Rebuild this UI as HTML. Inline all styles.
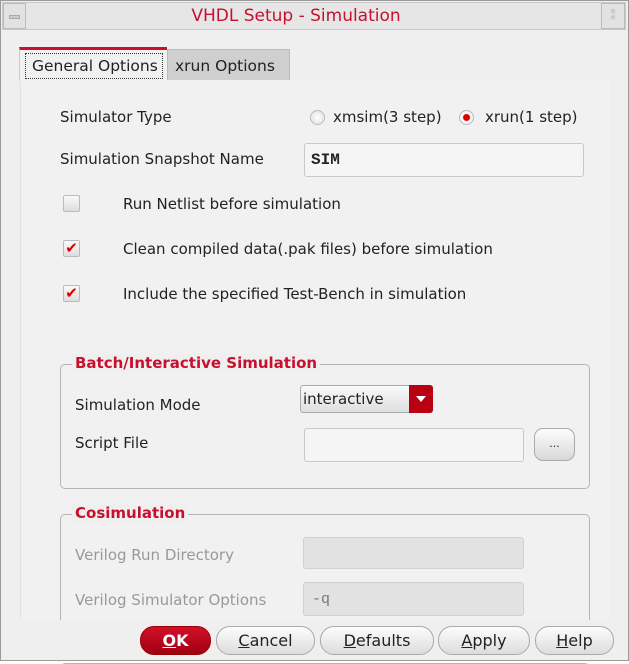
<!DOCTYPE html>
<html><head><style>
*{box-sizing:border-box;margin:0;padding:0}
body{width:629px;height:663px;background:#fff;font-family:"DejaVu Sans","Liberation Sans",sans-serif;font-size:15px;color:#222;position:relative;overflow:hidden}
.a{position:absolute}
.win{left:0;top:0;width:629px;height:663px;border:1px solid #999;background:#efefef}
.tb{left:2px;top:2px;width:624px;height:28px;background:#e6e6e6;border:1px solid #c8c8c8}
.lbl{position:absolute;line-height:18px;white-space:nowrap}
.inp{position:absolute;background:#f5f5f5;border:1px solid #c8c8c8;border-radius:3px}
.cb{position:absolute;width:17px;height:17px;border:1px solid #bbb;border-radius:2px;background:linear-gradient(#fafafa,#ddd);color:#d00;font-size:15px;line-height:15px;text-align:center;font-weight:bold}
.grp{position:absolute;border:1px solid #b5b5b5;border-radius:5px}
.gt{position:absolute;background:#efefef;color:#c8102e;font-weight:bold;padding:0 3px;line-height:18px}
.btn{position:absolute;top:626px;height:29px;border:1px solid #aaa;border-radius:14px;background:linear-gradient(#fdfdfd,#dcdcdc);text-align:center;line-height:27px;font-size:16px}
u{text-decoration:underline}
</style></head><body>
<div class="a win"></div>
<div class="a tb"></div>
<div class="a" style="left:3px;top:3px;width:23px;height:26px;border:1px solid #bbb;background:#e2e2e2"><div style="margin:11px 5px;height:4px;background:#ccc;border:1px solid #aaa"></div></div>
<div class="a" style="left:601px;top:3px;width:24px;height:26px;border:1px solid #bbb;background:#e2e2e2;color:#bbb;font-size:12px;text-align:center;line-height:24px">⁑</div>
<div class="lbl" style="left:0;width:592px;text-align:center;top:6px;color:#c8102e;font-size:17px;line-height:20px">VHDL Setup - Simulation</div>

<div class="a" style="left:20px;top:80px;width:590px;height:540px;background:#f1f1f1;border-left:1px solid #e2e2e2"></div>
<div class="a" style="left:19px;top:47px;width:148px;height:34px;background:#f1f1f1;border-top:3px solid #c8102e;border-left:1px solid #ccc"></div>
<div class="a" style="left:25px;top:53px;width:138px;height:26px;border:1px dotted #333"></div>
<div class="lbl" style="left:32px;top:57px;font-size:15.5px">General Options</div>
<div class="a" style="left:167px;top:49px;width:123px;height:31px;background:#cfcfcf;border:1px solid #bbb;border-bottom:none"></div>
<div class="lbl" style="left:175px;top:57px;font-size:15.5px">xrun Options</div>

<div class="lbl" style="left:60px;top:108px">Simulator Type</div>
<div class="a" style="left:310px;top:110px;width:15px;height:15px;border-radius:50%;background:radial-gradient(#fff,#ddd);border:1px solid #bbb"></div>
<div class="lbl" style="left:333px;top:108px">xmsim(3 step)</div>
<div class="a" style="left:459px;top:110px;width:15px;height:15px;border-radius:50%;background:radial-gradient(#d00 0,#d00 3px,#fff 4px,#ddd);border:1px solid #bbb"></div>
<div class="lbl" style="left:485px;top:108px">xrun(1 step)</div>

<div class="lbl" style="left:60px;top:150px">Simulation Snapshot Name</div>
<div class="inp" style="left:304px;top:143px;width:280px;height:34px"></div>
<div class="lbl" style="left:311px;top:151px;font-family:'Liberation Mono',monospace;font-weight:bold;font-size:16px">SIM</div>

<div class="cb" style="left:63px;top:195px"></div>
<div class="lbl" style="left:123px;top:195px">Run Netlist before simulation</div>
<div class="cb" style="left:63px;top:240px">✔</div>
<div class="lbl" style="left:123px;top:240px">Clean compiled data(.pak files) before simulation</div>
<div class="cb" style="left:63px;top:285px">✔</div>
<div class="lbl" style="left:123px;top:285px">Include the specified Test-Bench in simulation</div>

<div class="grp" style="left:60px;top:364px;width:530px;height:125px"></div>
<div class="gt" style="left:72px;top:354px">Batch/Interactive Simulation</div>
<div class="lbl" style="left:75px;top:396px">Simulation Mode</div>
<div class="a" style="left:300px;top:385px;width:133px;height:28px;border:1px solid #aaa;border-radius:3px;background:linear-gradient(#fafafa,#dedede)"></div>
<div class="a" style="left:409px;top:385px;width:24px;height:28px;background:#b80012;border-radius:0 3px 3px 0"></div>
<div class="a" style="left:416px;top:396px;width:0;height:0;border-left:5px solid transparent;border-right:5px solid transparent;border-top:6px solid #fff"></div>
<div class="lbl" style="left:303px;top:390px">interactive</div>
<div class="lbl" style="left:75px;top:434px">Script File</div>
<div class="inp" style="left:304px;top:428px;width:220px;height:34px"></div>
<div class="a" style="left:534px;top:428px;width:41px;height:33px;border:1px solid #aaa;border-radius:9px;background:linear-gradient(#fdfdfd,#d8d8d8);text-align:center;font-size:11px;line-height:30px">...</div>

<div class="grp" style="left:60px;top:514px;width:530px;height:150px"></div>
<div class="gt" style="left:72px;top:504px">Cosimulation</div>
<div class="lbl" style="left:75px;top:546px;color:#999">Verilog Run Directory</div>
<div class="inp" style="left:303px;top:537px;width:221px;height:32px;background:#e2e2e2;border-color:#d0d0d0"></div>
<div class="lbl" style="left:75px;top:591px;color:#999">Verilog Simulator Options</div>
<div class="inp" style="left:303px;top:582px;width:221px;height:34px;background:#e2e2e2;border-color:#d0d0d0"></div>
<div class="lbl" style="left:312px;top:591px;color:#777;font-family:'Liberation Mono',monospace">-q</div>

<div class="a" style="left:1px;top:620px;width:627px;height:42px;background:#efefef"></div>
<div class="btn" style="left:140px;width:71px;background:linear-gradient(#d0102a,#a00010);border-color:#900;color:#fff;font-weight:bold"><u>O</u>K</div>
<div class="btn" style="left:216px;width:99px"><u>C</u>ancel</div>
<div class="btn" style="left:320px;width:114px"><u>D</u>efaults</div>
<div class="btn" style="left:438px;width:92px"><u>A</u>pply</div>
<div class="btn" style="left:535px;width:79px"><u>H</u>elp</div>
<div class="a" style="left:0;top:660px;width:629px;height:3px;border-top:1px solid #999;background:#fff"></div>
</body></html>
